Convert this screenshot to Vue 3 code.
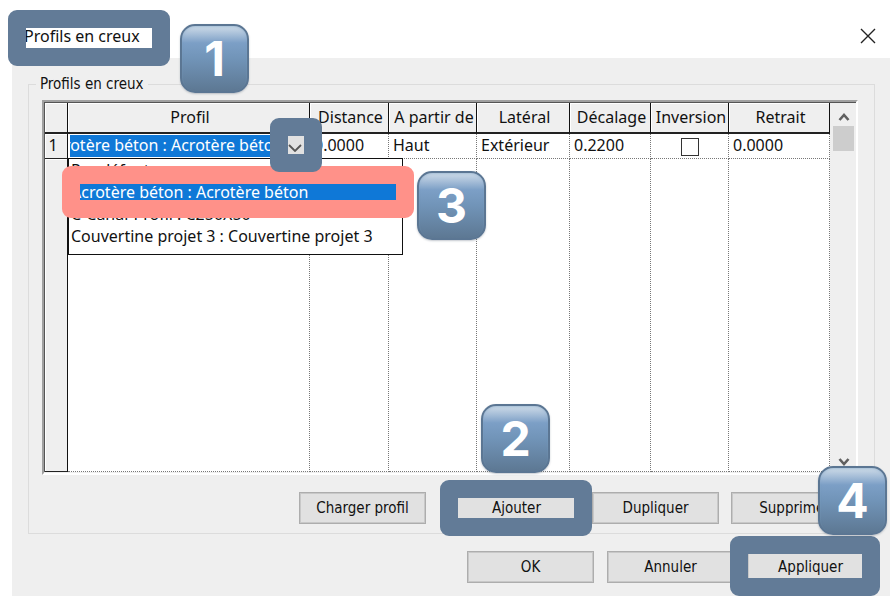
<script setup>
import { ref } from 'vue'

const columns = [
  { key: 'num', label: '' },
  { key: 'profil', label: 'Profil' },
  { key: 'distance', label: 'Distance' },
  { key: 'partir', label: 'A partir de' },
  { key: 'lateral', label: 'Latéral' },
  { key: 'decalage', label: 'Décalage' },
  { key: 'inversion', label: 'Inversion' },
  { key: 'retrait', label: 'Retrait' },
]

const profils = [
  'Par défaut',
  'Acrotère béton : Acrotère béton',
  'C-Canal-Profil : C250X50',
  'Couvertine projet 3 : Couvertine projet 3',
]

const row = ref({
  profil: profils[1],
  distance: '0.0000',
  partir: 'Haut',
  lateral: 'Extérieur',
  decalage: '0.2200',
  inversion: false,
  retrait: '0.0000',
})
</script>

<template>
  <main class="dialog">
    <header class="titlebar">
      <h1 class="title">Profils en creux<span class="mark mark-title"></span><span class="badge badge-1">1</span></h1>
      <button class="close" type="button" aria-label="Fermer">
        <svg width="16" height="16" viewBox="0 0 16 16"><path d="M1 1L15 15M15 1L1 15" fill="none" stroke="#222" stroke-width="1.4" /></svg>
      </button>
    </header>

    <div class="body">
      <fieldset class="group">
        <legend>Profils en creux</legend>
        <div class="frame">
          <table class="grid">
            <colgroup>
              <col v-for="c in columns" :key="c.key" :class="'col-' + c.key" />
            </colgroup>
            <thead>
              <tr><th v-for="c in columns" :key="c.key" scope="col">{{ c.label }}</th></tr>
            </thead>
            <tbody>
              <tr class="entry">
                <th scope="row">1</th>
                <td>
                  <div class="combo">
                    <input v-model="row.profil" class="combo-text" type="text" aria-label="Profil" />
                    <button class="combo-button" type="button" aria-label="Ouvrir la liste">
                      <svg width="14" height="8" viewBox="0 0 14 8"><path d="M1 1L7 7L13 1" fill="none" stroke="#555" stroke-width="1.8" /></svg>
                    </button>
                    <ul class="options" role="listbox" aria-label="Profils">
                      <li v-for="p in profils" :key="p" role="option" :aria-selected="p === row.profil" @click="row.profil = p">{{ p }}</li>
                    </ul>
                    <span class="mark mark-option"></span>
                    <span class="mark mark-combo"></span>
                    <span class="badge badge-3">3</span>
                  </div>
                </td>
                <td><input v-model="row.distance" type="text" aria-label="Distance" /></td>
                <td><select v-model="row.partir" aria-label="A partir de"><option>Haut</option></select></td>
                <td><select v-model="row.lateral" aria-label="Latéral"><option>Extérieur</option></select></td>
                <td><input v-model="row.decalage" type="text" aria-label="Décalage" /></td>
                <td class="center"><input v-model="row.inversion" type="checkbox" aria-label="Inversion" /></td>
                <td><input v-model="row.retrait" type="text" aria-label="Retrait" /></td>
              </tr>
              <tr class="filler"><th></th><td v-for="n in 7" :key="n"></td></tr>
            </tbody>
          </table>
          <div class="scrollbar">
            <svg width="12" height="10" viewBox="0 0 12 10"><path d="M1.5 8L6 3L10.5 8" fill="none" stroke="#606060" stroke-width="2.6" /></svg>
            <span class="thumb"></span>
            <svg width="12" height="10" viewBox="0 0 12 10"><path d="M1.5 2L6 7L10.5 2" fill="none" stroke="#606060" stroke-width="2.6" /></svg>
          </div>
        </div>
        <div class="actions">
          <button class="push load" type="button">Charger profil</button>
          <button class="push" type="button">Ajouter<span class="mark mark-add"></span><span class="badge badge-2">2</span></button>
          <button class="push" type="button">Dupliquer</button>
          <button class="push" type="button">Supprimer</button>
        </div>
      </fieldset>
      <footer class="footer">
        <button class="push" type="button">OK</button>
        <button class="push" type="button">Annuler</button>
        <button class="push" type="button">Appliquer<span class="mark mark-apply"></span><span class="badge badge-4">4</span></button>
      </footer>
    </div>
  </main>
</template>

<style>
body {
  margin: 0;
  background: #fff;
}
</style>

<style scoped>
* {
  box-sizing: border-box;
}
.dialog {
  margin: 0 4px 18px 12px;
  font-family: "Noto Sans", "Open Sans", sans-serif;
  font-size: 16px;
  line-height: 22px;
  color: #111;
}
button,
input,
select {
  font: inherit;
  color: inherit;
}
.titlebar {
  display: flex;
  align-items: center;
  justify-content: space-between;
  height: 58px;
  padding: 14px 14px 0 12px;
}
.title {
  position: relative;
  margin: 0;
  font-size: 16px;
  font-weight: 400;
}
.close {
  display: flex;
  padding: 0;
  border: 0;
  background: none;
}
.body {
  padding: 15px 15px 13px 16px;
  background: #efefef;
}
.group {
  min-width: 0;
  margin: 0;
  padding: 5px 16px 9px 13px;
  border: 1px solid #dcdcdc;
}
legend {
  margin-left: -6px;
  padding: 0 4px;
  font-family: "DejaVu Sans Condensed", "DejaVu Sans", sans-serif;
  font-size: 15px;
}
.frame {
  display: flex;
  border: 2px solid #a0a0a0;
  border-right-color: #fff;
  border-bottom-color: #fff;
  background: #efefef;
}
.grid {
  flex: 1;
  width: 0;
  table-layout: fixed;
  border-collapse: separate;
  border-spacing: 0;
  border-top: 1px solid #555;
  border-left: 1px solid #555;
  margin-bottom: 1px;
  background: #fff;
}
.col-num { width: 23px; }
.col-distance { width: 79px; }
.col-partir { width: 88px; }
.col-lateral { width: 93px; }
.col-decalage { width: 81px; }
.col-inversion { width: 78px; }
.col-retrait { width: 101px; }
th {
  padding: 0;
  border-right: 1px solid #111;
  background: #efefef;
  box-shadow: inset 1px 1px #fff;
  font-weight: 400;
  white-space: nowrap;
}
thead th {
  height: 31px;
  padding: 0 0 1px 3px;
  border-bottom: 2px solid #222;
}
td {
  padding: 0;
  border-right: 1px dotted #777;
  border-bottom: 1px dotted #777;
}
tbody th {
  padding: 0 6px 2px 0;
  border-bottom: 1px solid #222;
}
.entry > * {
  height: 25px;
}
.filler > * {
  height: 313px;
}
td > input[type="text"],
select {
  display: block;
  width: 100%;
  height: 24px;
  padding: 0 0 2px 4px;
  border: 0;
  background: none;
  appearance: none;
}
.center {
  text-align: center;
}
input[type="checkbox"] {
  display: block;
  width: 18px;
  height: 18px;
  margin: 2px auto 0;
  border: 1px solid #333;
  background: #fff;
  appearance: none;
}
.combo {
  position: relative;
  display: flex;
  align-items: center;
  height: 24px;
  padding: 0 2px;
}
.combo-text {
  flex: 1;
  min-width: 0;
  height: 22px;
  padding: 0 0 2px;
  border: 0;
  background: #0f78d7;
  color: #fff;
  text-indent: -24px;
}
.combo-button {
  display: flex;
  align-items: center;
  justify-content: center;
  width: 24px;
  height: 22px;
  padding: 4px 0 0;
  border: 0;
  background: #e1e1e1;
}
.options {
  position: absolute;
  top: 24px;
  left: 0;
  z-index: 1;
  width: 335px;
  margin: 0;
  padding: 0 0 7px;
  border: 1px solid #111;
  background: #fff;
  list-style: none;
  white-space: nowrap;
}
.options li {
  padding-left: 2px;
}
.options li[aria-selected="true"] {
  background: #0f78d7;
  color: #fff;
}
.scrollbar {
  display: flex;
  flex-direction: column;
  align-items: center;
  width: 26px;
  padding: 9px 2px 6px 3px;
  border-top: 1px solid #555;
}
.thumb {
  width: 100%;
  height: 25px;
  margin: 4px 0 auto;
  background: #cdcdcd;
}
.actions,
.footer {
  display: flex;
  justify-content: flex-end;
  gap: 12px;
  padding-top: 17px;
}
.footer {
  gap: 13px;
  padding-right: 1px;
}
.push {
  position: relative;
  width: 127px;
  height: 32px;
  padding: 0;
  border: 1px solid #adadad;
  background: #e1e1e1;
  box-shadow: inset 0 0 0 1px #c8c8c8;
  font-family: "DejaVu Sans Condensed", "DejaVu Sans", sans-serif;
  font-size: 15px;
}
.load {
  margin-right: 15px;
}
.mark {
  position: absolute;
  z-index: 2;
  border: 18px solid #627b97;
  border-radius: 9px;
  pointer-events: none;
}
.mark-title {
  top: -15px;
  left: -16px;
  width: 162px;
  height: 56px;
}
.mark-option {
  top: 32px;
  left: -6px;
  width: 352px;
  height: 52px;
  border-color: #ff9189;
}
.mark-combo {
  top: -16px;
  right: -13px;
  width: 52px;
  height: 54px;
}
.mark-add {
  top: -13px;
  left: -14px;
  width: 152px;
  height: 56px;
}
.mark-apply {
  top: -16px;
  right: -7px;
  width: 150px;
  height: 60px;
}
.badge {
  position: absolute;
  z-index: 3;
  width: 69px;
  height: 69px;
  border: 2px solid #5b7693;
  border-radius: 15px;
  background: linear-gradient(#cddbe8 0%, #a9c0d9 12%, #7c9fc6 26%, #7194b8 50%, #5d7893 100%);
  box-shadow: 0 1px 2px rgba(60, 75, 95, 0.3), inset 0 1px 2px rgba(130, 165, 200, 0.5);
  color: #fff;
  font: 700 48px/65px Inter, sans-serif;
  text-align: center;
  pointer-events: none;
}
.badge-1 {
  top: -1px;
  left: 156px;
}
.badge-2 {
  top: -89px;
  left: 27px;
}
.badge-3 {
  top: 37px;
  left: 349px;
}
.badge-4 {
  top: -86px;
  right: -14px;
}
</style>
